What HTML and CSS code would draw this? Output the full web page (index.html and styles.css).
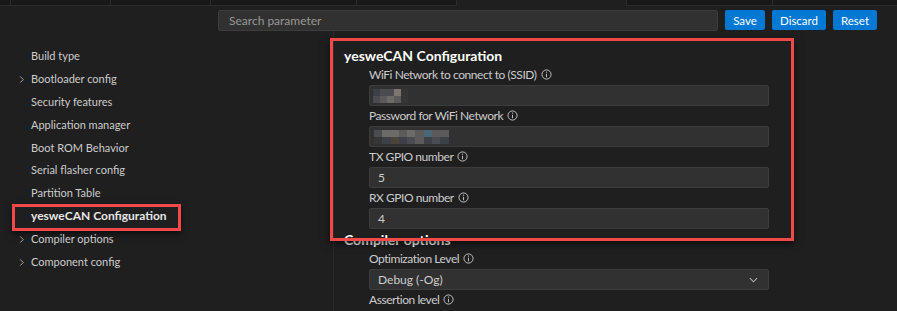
FILE: index.html
```html
<!DOCTYPE html>
<html lang="en">
<head>
  <meta charset="UTF-8">
  <meta name="viewport" content="width=device-width, initial-scale=1.0">
  <title>SDK Configuration Editor</title>
  <link rel="stylesheet" href="styles.css">
</head>
<body>
  <div class="tabs">
    <span class="tab tab-xs"></span>
    <span class="tab tab-md"></span>
    <span class="tab tab-md"></span>
    <span class="tab tab-lg"></span>
    <span class="tab tab-md"></span>
    <span class="tab tab-active"></span>
    <span class="tab tab-lg"></span>
    <span class="tab tab-rest"></span>
  </div>

  <div class="toolbar">
    <input class="search" type="text" placeholder="Search parameter">
    <button class="btn btn-save">Save</button>
    <button class="btn btn-discard">Discard</button>
    <button class="btn btn-reset">Reset</button>
  </div>

  <div class="layout">
    <nav class="menu">
      <ul>
        <li>Build type</li>
        <li class="has-children">
          <svg class="chev" viewBox="0 0 8 8"><polyline points="2.5,0.5 6,4 2.5,7.5"/></svg>
          Bootloader config
        </li>
        <li>Security features</li>
        <li>Application manager</li>
        <li>Boot ROM Behavior</li>
        <li>Serial flasher config</li>
        <li>Partition Table</li>
        <li class="active">yesweCAN Configuration<span class="highlight"></span></li>
        <li class="has-children">
          <svg class="chev" viewBox="0 0 8 8"><polyline points="2.5,0.5 6,4 2.5,7.5"/></svg>
          Compiler options
        </li>
        <li class="has-children">
          <svg class="chev" viewBox="0 0 8 8"><polyline points="2.5,0.5 6,4 2.5,7.5"/></svg>
          Component config
        </li>
      </ul>
    </nav>

    <main class="content">
      <section class="group group-marked">
        <h2>yesweCAN Configuration</h2>

        <div class="field">
          <label>WiFi Network to connect to (SSID)
            <svg class="info" viewBox="0 0 12 12"><circle cx="6" cy="6" r="5"/><line x1="6" y1="5.2" x2="6" y2="9"/><circle class="dot" cx="6" cy="3.4" r="0.7"/></svg>
          </label>
          <div class="input">
            <span class="mosaic mosaic-ssid">
              <i class="c1"></i><i class="c2"></i><i class="c2"></i><i class="c5"></i><i class="c0"></i>
              <i class="c2"></i><i class="c3"></i><i class="c4"></i><i class="c3"></i><i class="c0"></i>
            </span>
          </div>
        </div>

        <div class="field">
          <label>Password for WiFi Network
            <svg class="info" viewBox="0 0 12 12"><circle cx="6" cy="6" r="5"/><line x1="6" y1="5.2" x2="6" y2="9"/><circle class="dot" cx="6" cy="3.4" r="0.7"/></svg>
          </label>
          <div class="input">
            <span class="mosaic mosaic-pass">
              <i class="c2"></i><i class="c4"></i><i class="c4"></i><i class="c3"></i><i class="c4"></i><i class="c3"></i><i class="cb"></i><i class="c3"></i><i class="c3"></i>
              <i class="c0"></i><i class="c1"></i><i class="c6"></i><i class="c1"></i><i class="c2"></i><i class="c3"></i><i class="c1"></i><i class="c2"></i><i class="c1"></i>
            </span>
          </div>
        </div>

        <div class="field">
          <label>TX GPIO number
            <svg class="info" viewBox="0 0 12 12"><circle cx="6" cy="6" r="5"/><line x1="6" y1="5.2" x2="6" y2="9"/><circle class="dot" cx="6" cy="3.4" r="0.7"/></svg>
          </label>
          <div class="input">5</div>
        </div>

        <div class="field">
          <label>RX GPIO number
            <svg class="info" viewBox="0 0 12 12"><circle cx="6" cy="6" r="5"/><line x1="6" y1="5.2" x2="6" y2="9"/><circle class="dot" cx="6" cy="3.4" r="0.7"/></svg>
          </label>
          <div class="input">4</div>
        </div>

        <span class="marker"></span>
      </section>

      <section class="group">
        <h2>Compiler options</h2>

        <div class="field">
          <label>Optimization Level
            <svg class="info" viewBox="0 0 12 12"><circle cx="6" cy="6" r="5"/><line x1="6" y1="5.2" x2="6" y2="9"/><circle class="dot" cx="6" cy="3.4" r="0.7"/></svg>
          </label>
          <div class="input select">
            Debug (-Og)
            <svg class="caret" viewBox="0 0 10 6"><polyline points="1,1 5,5 9,1"/></svg>
          </div>
        </div>

        <div class="field">
          <label>Assertion level
            <svg class="info" viewBox="0 0 12 12"><circle cx="6" cy="6" r="5"/><line x1="6" y1="5.2" x2="6" y2="9"/><circle class="dot" cx="6" cy="3.4" r="0.7"/></svg>
          </label>
        </div>
      </section>
    </main>
  </div>
</body>
</html>
```

FILE: styles.css
```css
:root {
  --bg: #1f1f1f;
  --bar: #181818;
  --line: #2b2b2b;
  --input-bg: #313131;
  --input-border: #3c3c3c;
  --text: #cccccc;
  --muted: #989898;
  --accent: #0078d4;
  --mark: #f24848;
}

* {
  margin: 0;
  padding: 0;
  box-sizing: border-box;
}

body {
  font-family: Lato, "Noto Sans", sans-serif;
  color: var(--text);
  background-color: var(--bg);
  width: 897px;
  height: 311px;
  overflow: hidden;
}

/* editor tab strip, cut off at the top */
.tabs {
  display: flex;
  height: 6px;
}

.tab {
  background-color: var(--bar);
  border-right: 1px solid var(--line);
  border-bottom: 1px solid var(--line);
}

.tab-xs { width: 11px; }
.tab-md { width: 100px; }
.tab-lg { width: 146px; }
.tab-active {
  width: 170px;
  background-color: var(--bg);
  border-bottom-color: transparent;
}
.tab-rest { flex: 1; border-right: none; }

/* search + actions */
.toolbar {
  display: flex;
  align-items: flex-start;
  gap: 7px;
  padding: 4px 0 0 218px;
  height: 25px;
}

.search {
  width: 500px;
  height: 21px;
  padding: 0 10px;
  font-family: inherit;
  font-size: 12px;
  color: var(--text);
  background-color: var(--input-bg);
  border: 1px solid var(--input-border);
  border-radius: 2px;
  outline: none;
}

.search::placeholder {
  color: var(--muted);
}

.btn {
  height: 20px;
  padding: 0;
  font-family: inherit;
  font-size: 11.5px;
  text-align: center;
  color: #ffffff;
  background-color: var(--accent);
  border: none;
  border-radius: 2px;
}

.btn-save { width: 40px; }
.btn-discard { width: 54px; }
.btn-reset { width: 44px; }

/* layout */
.layout {
  display: grid;
  grid-template-columns: 333px 1fr;
}

.menu ul {
  list-style: none;
  padding-top: 14px;
}

.menu li {
  position: relative;
  height: 22.9px;
  line-height: 22.9px;
  padding-left: 31px;
  font-size: 11px;
}

.menu .chev {
  position: absolute;
  left: 18px;
  top: 8px;
  width: 7px;
  height: 7px;
  fill: none;
  stroke: #b8b8b8;
  stroke-width: 1;
}

.menu li.active {
  font-size: 12px;
  font-weight: 700;
  color: #e6e6e6;
}

.highlight {
  position: absolute;
  left: 12px;
  top: -1px;
  width: 169px;
  height: 27px;
  border: 3px solid var(--mark);
  box-shadow: 0 3px 6px rgba(0, 0, 0, 0.55);
}

.content {
  border-left: 1px solid var(--line);
  padding-top: 16px;
  min-height: 280px;
}

.group {
  position: relative;
}

.group + .group {
  margin-top: 2px;
}

.group h2 {
  font-size: 14px;
  font-weight: 700;
  line-height: 18px;
  color: #ffffff;
  padding-left: 10px;
}

.field {
  padding-left: 35px;
}

.field label {
  display: flex;
  align-items: center;
  height: 20px;
  padding-bottom: 2px;
  font-size: 12px;
  letter-spacing: -0.45px;
}

.info {
  width: 11px;
  height: 11px;
  margin-left: 4px;
  fill: none;
  stroke: var(--text);
  stroke-width: 1;
}

.info .dot {
  fill: var(--text);
  stroke: none;
}

.input {
  display: flex;
  align-items: center;
  width: 400px;
  height: 21px;
  padding: 0 8px;
  font-size: 12px;
  background-color: var(--input-bg);
  border: 1px solid var(--input-border);
  border-radius: 2px;
}

.select {
  justify-content: space-between;
}

.caret {
  width: 9px;
  height: 6px;
  margin-right: 2px;
  fill: none;
  stroke: #b0b0b0;
  stroke-width: 1.2;
}

/* blurred-out values */
.mosaic {
  display: grid;
  grid-auto-rows: 7px;
}

.mosaic-ssid {
  grid-template-columns: repeat(5, 7px);
  margin-left: -5px;
}

.mosaic-pass {
  grid-template-columns: repeat(9, 8.3px);
  margin-left: -4px;
}

.mosaic i { display: block; }
.mosaic .c0 { background-color: #363636; }
.mosaic .c1 { background-color: #3d4047; }
.mosaic .c2 { background-color: #4a4c51; }
.mosaic .c3 { background-color: #5d5a5b; }
.mosaic .c4 { background-color: #6c6b67; }
.mosaic .c5 { background-color: #7c7670; }
.mosaic .c6 { background-color: #4a4538; }
.mosaic .cb { background-color: #4a6679; }

/* annotation frame over the selected group */
.marker {
  position: absolute;
  left: -4px;
  top: -9px;
  width: 464px;
  height: 203px;
  border: 3px solid var(--mark);
  box-shadow: 0 3px 8px rgba(0, 0, 0, 0.6);
  pointer-events: none;
  z-index: 2;
}
```
